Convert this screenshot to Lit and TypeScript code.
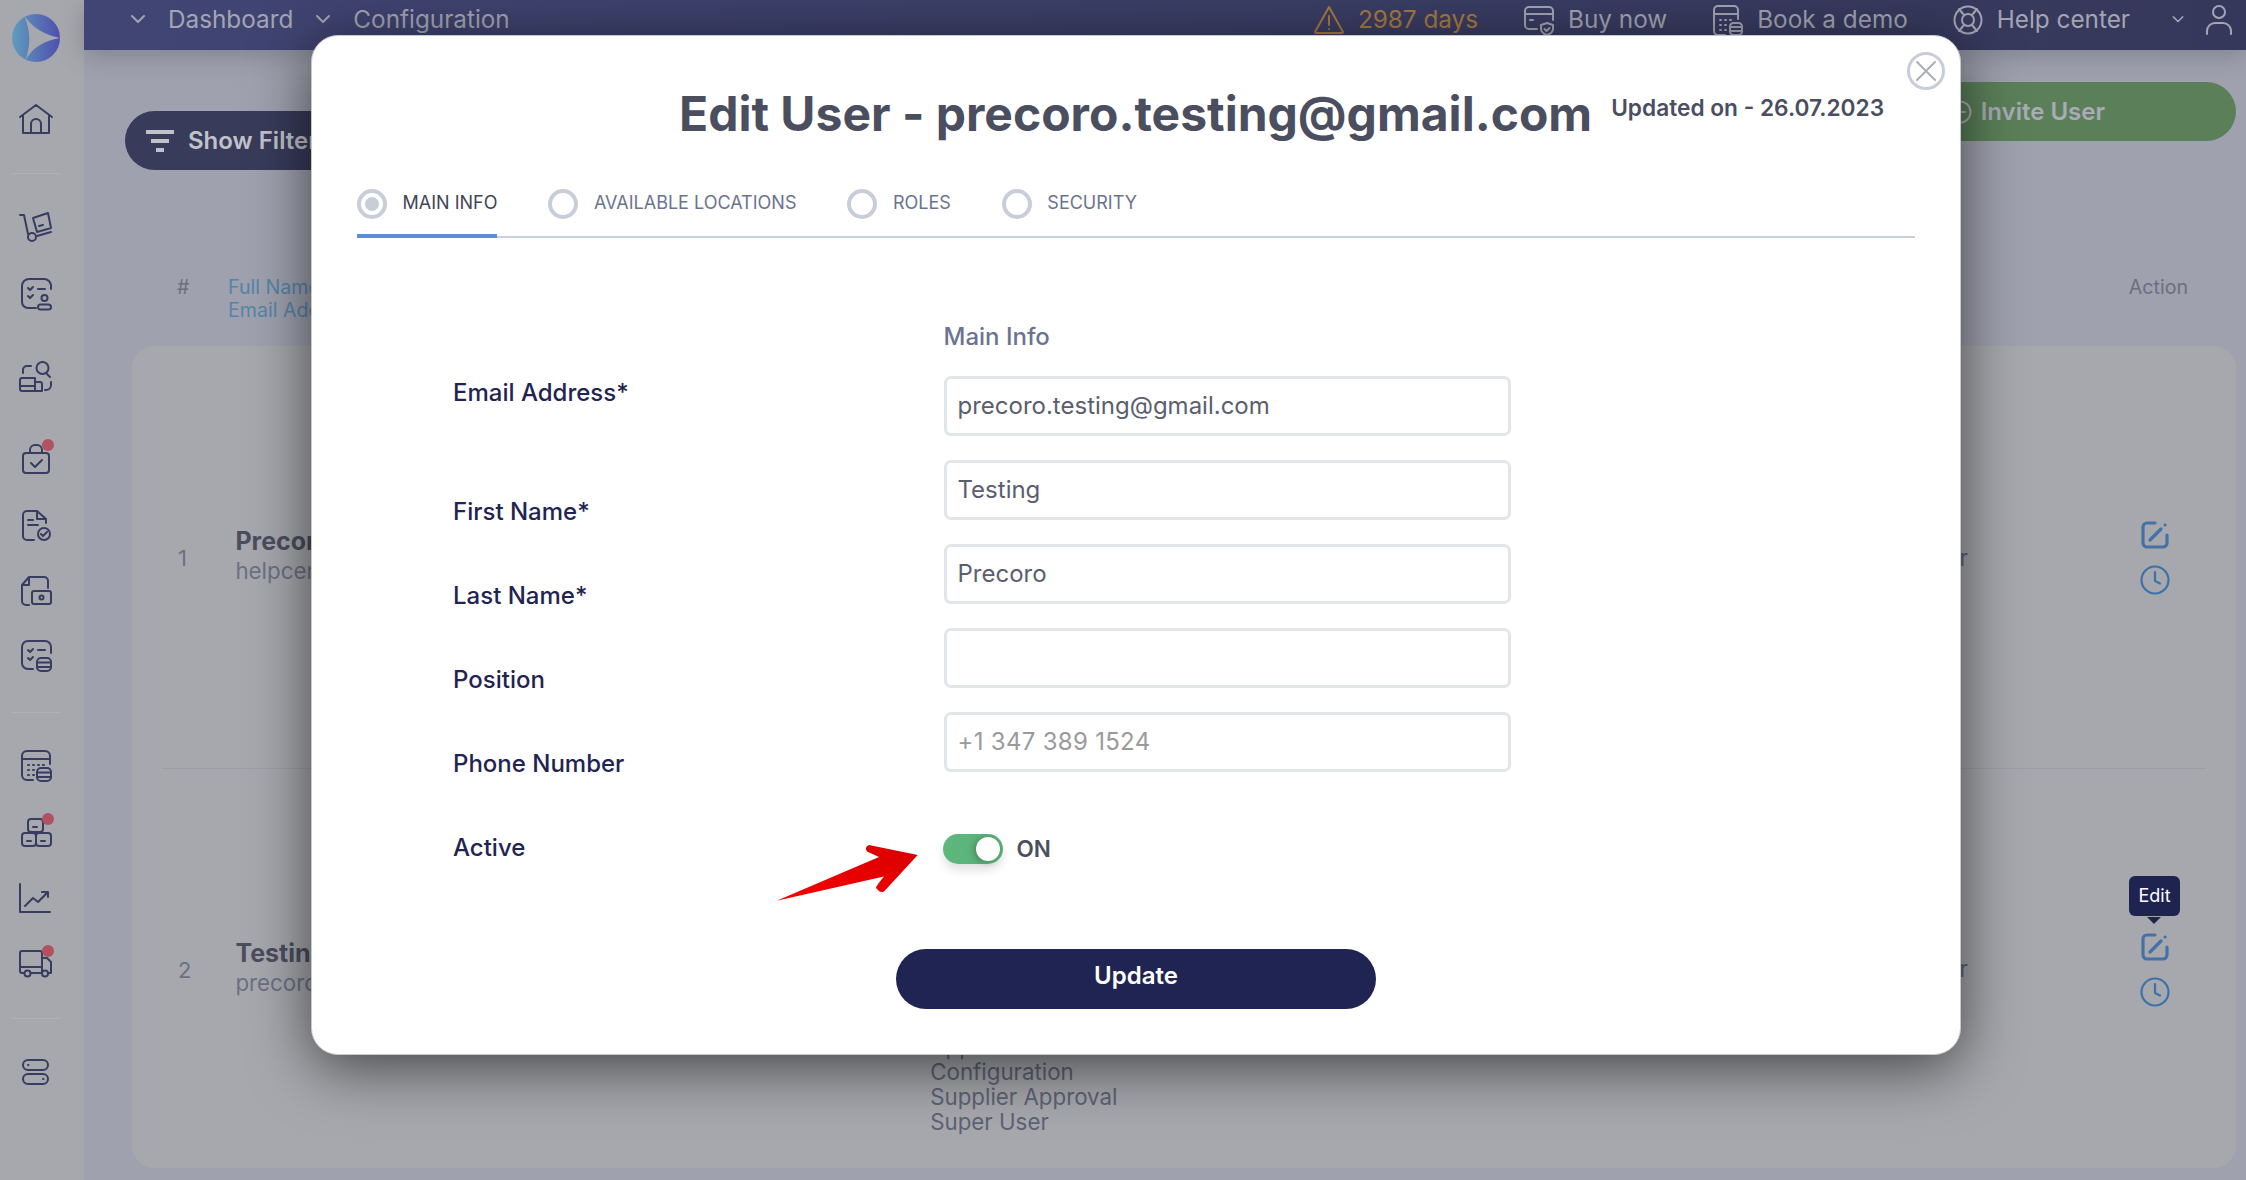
import { LitElement, html, css, svg } from "lit";
import { customElement } from "lit/decorators.js";

const db = svg`<rect x="19" y="20" width="14" height="13" rx="4"/><path d="M19 24.5h14M19 29h14"/>`;
const nav: { h: number; badge?: boolean; divider?: boolean; p?: any }[] = [
  { h: 86, p: svg`<path d="M2 16 18 4l16 12M5 14v18h26V14M13 32V23a5 5 0 0 1 10 0v9"/>` },
  { h: 22, divider: true },
  { h: 84, p: svg`<path d="M2 7h4l4 19M19 28l14-4M15 10l15-5 3 15-14 4zM21 18l4-1"/><circle cx="14" cy="29" r="4"/>` },
  { h: 54, p: svg`<path d="M18 31h-8a6 6 0 0 1-6-6V9a7 7 0 0 1 7-7h15a7 7 0 0 1 7 7v3M10 11l2 2 3-3M10 19l2 2 3-3M20 12h7"/><circle cx="26.5" cy="21" r="3"/><rect x="20" y="27.500" width="13" height="5" rx="2.500"/>` },
  { h: 110, p: svg`<path d="M5 14v-3a4 4 0 0 1 4-4h4M29 15l3 3M33 23v3a5 5 0 0 1-5 5h-1M2 27h15M17 23h5a2 2 0 0 1 2 2v7H4a2 2 0 0 1-2-2V21a2 2 0 0 1 2-2h13v13"/><circle cx="24.500" cy="9" r="6"/>` },
  { h: 52, badge: true, p: svg`<rect x="5" y="13" width="26" height="20" rx="3"/><path d="M12 13v-3a5 5 0 0 1 5-5h2a5 5 0 0 1 5 5v3M13 23l4 4 7-7"/>` },
  { h: 84, p: svg`<path d="M16 32H9a4 4 0 0 1-4-4V7a4 4 0 0 1 4-4h10l9 8v4M19 3v8h9M10 12h5M10 17h10"/><circle cx="26" cy="26" r="6"/><path d="m23 26 2 2 4-4"/>` },
  { h: 48, p: svg`<path d="M11 31H8a4 4 0 0 1-4-4V11l7-8h15a4 4 0 0 1 4 4v7M11 3v8H4"/><rect x="14" y="17" width="19" height="13" rx="2"/><circle cx="23.500" cy="23.500" r="2"/>` },
  { h: 80, p: svg`<path d="M15 31h-5a6 6 0 0 1-6-6V9a6 6 0 0 1 6-6h17a6 6 0 0 1 6 6v6M10 12l2 2 3-3M10 20l2 2 3-3M20 12h7"/>${db}` },
  { h: 32, divider: true },
  { h: 76, p: svg`<path d="M15 32H9a5 5 0 0 1-5-5V8a5 5 0 0 1 5-5h18a5 5 0 0 1 5 5v8M4 11h28M10 17h1M15 17h1M20 17h1M25 17h1M10 22h1M15 22h1M10 27h1M15 27h1"/>${db}` },
  { h: 56, badge: true, p: svg`<rect x="10" y="5" width="15" height="13" rx="3"/><rect x="4" y="19" width="14" height="13" rx="3"/><rect x="18" y="19" width="15" height="13" rx="3"/><path d="M15 13h4M9 27h4M23 27h4"/>` },
  { h: 76, p: svg`<path d="M2 4v28h30M7 26l8-8 5 4 9-9M24 12h6v5"/>` },
  { h: 56, badge: true, p: svg`<path d="M6 27H4a2 2 0 0 1-2-2V7a2 2 0 0 1 2-2h18a2 2 0 0 1 2 2v20H13M2 21h22M24 12h5l4 4v11h-2M24 27h0"/><circle cx="9.500" cy="27.500" r="3"/><circle cx="27" cy="27.500" r="3"/>` },
  { h: 52, divider: true },
  { h: 58, p: svg`<rect x="5" y="5" width="25" height="10" rx="5"/><rect x="5" y="19" width="25" height="10" rx="5"/><path d="M10 10h.5M25 24h.5"/>` },
];

const chevron = svg`<path d="M3 5l6 6 6-6"/>`;
const tabs = ["MAIN INFO", "AVAILABLE LOCATIONS", "ROLES", "SECURITY"];
const labels = ["First Name*", "Last Name*", "Position", "Phone Number", "Active"];

const editIcon = html`<svg class="act" width="28" height="28" viewBox="0 0 28 28"><path d="M14 2H6a4 4 0 0 0-4 4v16a4 4 0 0 0 4 4h16a4 4 0 0 0 4-4v-8M9 19 20 8M24 4h.1"/></svg>`;
const clockIcon = html`<svg class="clock" width="30" height="30" viewBox="0 0 30 30"><circle cx="15" cy="15" r="13.500"/><path d="M15 7v9l5 2.500"/></svg>`;

@customElement("app-root")
export class AppRoot extends LitElement {
  static styles = css`
    :host { display: block; width: 2246px; height: 1180px; position: relative; overflow: hidden; font-family: Inter, "Liberation Sans", sans-serif; background: #9fa1ae; }
    svg { display: block; fill: none; stroke: currentColor; stroke-linecap: round; stroke-linejoin: round; }
    .page { display: flex; height: 100%; }
    .side { width: 84px; flex: none; background: #a7a8ad; color: #383c60; padding-right: 12px; box-sizing: border-box; }
    .logo { height: 76px; display: flex; align-items: center; justify-content: center; }
    .logo svg { stroke: none; }
    .slot { display: flex; align-items: center; justify-content: center; }
    .icon { position: relative; width: 36px; height: 36px; }
    .icon svg { stroke-width: 2; }
    .badge { position: absolute; left: 24px; top: -1px; width: 12px; height: 12px; border-radius: 50%; background: #b2515f; }
    .divider { width: 48px; height: 1px; background: #b0b1b6; }
    .main { flex: 1; min-width: 0; display: flex; flex-direction: column; }
    .top { height: 50px; flex: none; display: flex; align-items: flex-start; padding: 0 12px 0 45px; box-sizing: border-box; background: linear-gradient(90deg, #414574, #35385a); color: #a3a5b3; font-size: 24.300px; line-height: 39px; box-shadow: 0 6px 24px rgba(60,62,80,.3); position: relative; z-index: 1; }
    .top svg { stroke-width: 2; }
    .nav-i { display: flex; align-items: center; }
    .nav-i svg { margin-right: 21px; }
    .nav-i.second { margin-left: 21px; }
    .spacer { flex: 1; }
    .h-i { display: flex; align-items: center; height: 39px; }
    .h-i svg { margin-right: 13px; }
    .warn { color: #a87a3e; margin-right: 45px; }
    .buy { margin-right: 45px; }
    .demo { margin-right: 44px; }
    .help { margin-right: 41px; }
    .content { flex: 1; display: flex; flex-direction: column; padding: 61px 10px 12px 41px; min-height: 0; }
    .bar { display: flex; justify-content: space-between; height: 59px; flex: none; }
    .pill { display: flex; align-items: center; border-radius: 30px; font-size: 24px; font-weight: 600; color: #a9abb5; box-sizing: border-box; height: 59px; }
    .filter { background: #383b5a; padding: 0 60px 0 21px; gap: 14px; color: #c0c2ca; }
    .invite { background: #5b8059; width: 400px; justify-content: flex-end; padding-right: 131px; margin-top: -29px; gap: 9px; }
    .invite svg { stroke-width: 2; }
    .thead { display: flex; height: 50px; margin-top: 106px; font-size: 19.600px; line-height: 23px; color: #6c6f80; margin-left: 52px; flex: none; padding-right: 48px; }
    .thead .hash { width: 51px; }
    .thead .sort { color: #5684a8; flex: 1; }
    .card { flex: 1; margin: 20px 0 0 7px; background: #a7a8ad; border-radius: 22px; padding: 0 30px; display: flex; flex-direction: column; }
    .row { flex: 1; display: flex; align-items: center; position: relative; padding-left: 15px; font-size: 22.300px; color: #6c7083; }
    .row + .row { border-top: 1px solid #9b9da8; flex: 399; }
    .row:first-child { flex: 423; }
    .num { width: 58px; padding-left: 1px; margin-top: 2px; font-size: 22px; }
    .person { line-height: 30px; width: 695px; white-space: nowrap; margin-top: -2px; }
    .person b { display: block; font-weight: 700; font-size: 25px; color: #4a4e5f; }
    .roles { align-self: flex-end; margin-bottom: 34px; line-height: 25px; width: 995px; color: #5e6274; height: 100px; padding-left: 7px; box-sizing: border-box; }
    .row1 .roles { visibility: hidden; }
    .tail { width: 60px; text-align: right; flex: none; margin-right: 0; color: #5e6274; }
    .acts { width: 60px; margin: 2px 21px 0 157px; display: flex; flex-direction: column; align-items: center; gap: 16px; position: relative; flex: none; }
    .act { color: #4472a8; stroke-width: 3.200; }
    .clock { color: #3a72ac; stroke-width: 2.200; }
    .tip { position: absolute; left: 4px; top: -57px; width: 51px; height: 40px; border-radius: 6px; background: #1f2350; color: #fff; font-size: 18px; display: flex; align-items: center; justify-content: center; }
    .tip::after { content: ""; position: absolute; left: 18px; top: 41px; border: 7px solid transparent; border-top-color: #1f2350; border-bottom-width: 0; }

    .modal { position: absolute; left: 311px; top: 35px; width: 1650px; height: 1020px; box-sizing: border-box; background: #fff; border-radius: 27px; border: 1px solid #c9c9cb; box-shadow: 0 12px 60px rgba(0,0,0,.6); padding: 0 45px; display: flex; flex-direction: column; z-index: 2; }
    .head { display: flex; height: 152px; box-sizing: border-box; padding: 48px 0 0 322px; color: #4a4e5f; flex: none; align-items: flex-start; }
    .head h1 { margin: 0; font-size: 48px; line-height: 60px; font-weight: 700; white-space: nowrap; }
    .updated { font-size: 22.700px; font-weight: 600; margin: 9.500px 0 0 19px; line-height: 27px; white-space: nowrap; }
    .close { position: absolute; left: 1595px; top: 16px; color: #c8ced9; }
    .close svg { stroke-width: 3; }
    .tabs { display: flex; gap: 51px; border-bottom: 2px solid #c9cfdc; height: 50px; box-sizing: border-box; flex: none; font-size: 18px; font-weight: 400; color: #6c7390; }
    .tab { display: flex; gap: 15.500px; height: 50px; box-sizing: border-box; padding-top: 1px; align-items: flex-start; line-height: 28px; white-space: nowrap; }
    .tab.on { color: #3f4458; border-bottom: 4px solid #5b8dd9; }
    .tab svg { color: #c7ced9; stroke-width: 4; }
    .tab .dot { fill: #c7ced9; stroke: none; }
    .form { display: flex; flex: none; padding: 0 0 0 96px; }
    .labels { width: 490.500px; flex: none; padding-top: 140px; font-size: 24px; font-weight: 500; color: #1f2452; }
    .lab { height: 84px; line-height: 30px; }
    .lab.first { height: 119px; }
    .fields { width: 567px; padding-top: 83.500px; }
    .section { font-size: 24px; line-height: 30px; color: #6c7390; height: 54px; font-weight: 500; }
    .input { display: block; width: 100%; height: 60px; box-sizing: border-box; border: 3px solid #e2e5ea; border-radius: 7px; padding: 0 11px; margin: 0 0 24px; font: 24px Inter, sans-serif; color: #5a5e6e; background: #fff; outline: none; }
    .input::placeholder { color: #9a9a9a; opacity: 1; letter-spacing: .3px; }
    .switch { display: flex; align-items: center; gap: 14px; margin: 62px 0 0 -1px; font-size: 22.500px; font-weight: 600; color: #4a4e5f; height: 30px; }
    .track { width: 60px; height: 30px; border-radius: 15px; background: linear-gradient(90deg, #5db87c, #5bb076); position: relative; box-shadow: 0 6px 10px rgba(0,0,0,.12); }
    .knob { position: absolute; left: 33px; top: 3px; width: 24px; height: 24px; border-radius: 50%; background: #fff; box-shadow: -2px 1px 6px rgba(0,0,0,.25); }
    .update { align-self: center; flex: none; margin-top: 32px; width: 480px; height: 60px; border: 0; border-radius: 30px; background: #1f2452; color: #fff; font: 600 24px Inter, sans-serif; padding: 0 0 8px; }
    .arrow { position: absolute; left: 770px; top: 840px; z-index: 3; }
  `;

  render() {
    return html`
      <div class="page">
        <aside class="side">
          <div class="logo">
            <svg width="48" height="48" viewBox="12 14 48 48">
              <defs><linearGradient id="lg" x1="0" x2="1" y1="0" y2="0"><stop offset="0" stop-color="#5f9dbd"/><stop offset="1" stop-color="#4f4fae"/></linearGradient></defs>
              <circle cx="36" cy="38" r="24" fill="url(#lg)"/>
              <path d="M24 15Q35 33 60.500 38 35 42 25 61 34 38 24 15Z" fill="#a7a8ad"/>
            </svg>
          </div>
          ${nav.map((n) => html`<div class="slot" style="height:${n.h}px">
            ${n.divider ? html`<div class="divider"></div>` : html`<div class="icon"><svg width="36" height="36" viewBox="0 0 36 36">${n.p}</svg>${n.badge ? html`<span class="badge"></span>` : ""}</div>`}
          </div>`)}
        </aside>
        <div class="main">
          <header class="top">
            <div class="nav-i"><svg width="18" height="18" viewBox="0 0 18 18">${chevron}</svg>Dashboard</div>
            <div class="nav-i second"><svg width="18" height="18" viewBox="0 0 18 18">${chevron}</svg>Configuration</div>
            <div class="spacer"></div>
            <div class="h-i warn"><svg width="32" height="30" viewBox="0 0 32 30"><path d="M16 2 2 27a1 1 0 0 0 1 1h26a1 1 0 0 0 1-1L16 2ZM16 11v9M16 24h.1"/></svg>2987 days</div>
            <div class="h-i buy"><svg width="32" height="32" viewBox="0 0 32 32"><path d="M14 25H6a4 4 0 0 1-4-4V7a4 4 0 0 1 4-4h20a4 4 0 0 1 4 4v9M2 10h28M7 16h3M24 19l6 2v4c0 3-3 5-6 6-3-1-6-3-6-6v-4zM21.500 25l2 2 3-3"/></svg>Buy now</div>
            <div class="h-i demo"><svg width="32" height="32" viewBox="0 0 32 32"><path d="M13 31H6a4 4 0 0 1-4-4V6a4 4 0 0 1 4-4h16a4 4 0 0 1 4 4v9M2 10h24M8 16h1M13 16h1M18 16h1M8 21h1M13 21h1M8 26h1M13 26h1"/><rect x="18" y="19" width="12" height="12" rx="3.500"/><path d="M18 23h12M18 27h12"/></svg>Book a demo</div>
            <div class="h-i help"><svg width="32" height="32" viewBox="0 0 32 32"><circle cx="16" cy="16" r="13.500"/><circle cx="16" cy="16" r="6"/><path d="M7 5l5 6M25 5l-5 6M7 27l5-6M25 27l-5-6"/></svg>Help center</div>
            <div class="h-i"><svg width="14" height="14" viewBox="0 0 18 18">${chevron}</svg><svg style="margin:0 0 0 6px" width="30" height="32" viewBox="0 0 30 32"><circle cx="15" cy="8" r="6"/><path d="M3 30v-3a8 8 0 0 1 8-8h8a8 8 0 0 1 8 8v3"/></svg></div>
          </header>
          <div class="content">
            <div class="bar">
              <div class="pill filter"><svg width="28" height="24" viewBox="0 0 28 24" style="stroke-width:4;stroke-linecap:butt"><path d="M0 3h28M5 12h18M10 21h8"/></svg>Show Filter</div>
              <div class="pill invite"><svg width="24" height="24" viewBox="0 0 24 24"><circle cx="12" cy="12" r="10.500"/><path d="M12 7v10M7 12h10"/></svg>Invite User</div>
            </div>
            <div class="thead"><div class="hash">#</div><div class="sort">Full Name<br />Email Address</div><div>Action</div></div>
            <div class="card">
              <div class="row row1">
                <div class="num">1</div>
                <div class="person"><b>Precoro</b>helpcenter@precoro.com</div>
                <div class="roles"></div>
                <div class="tail">User</div>
                <div class="acts">${editIcon}${clockIcon}</div>
              </div>
              <div class="row">
                <div class="num">2</div>
                <div class="person"><b>Testing</b>precoro.testing@gmail.com</div>
                <div class="roles">Approval<br />Configuration<br />Supplier Approval<br />Super User</div>
                <div class="tail">User</div>
                <div class="acts"><div class="tip">Edit</div>${editIcon}${clockIcon}</div>
              </div>
            </div>
          </div>
        </div>
      </div>

      <section class="modal">
        <div class="close"><svg width="38" height="38" viewBox="0 0 38 38"><circle cx="19" cy="19" r="17.500"/><path stroke-width="2" d="M10 10l18 18M28 10 10 28" style="stroke:#a9afba"/></svg></div>
        <div class="head"><h1>Edit User - precoro.testing@gmail.com</h1><div class="updated">Updated on - 26.07.2023</div></div>
        <div class="tabs">
          ${tabs.map((t, i) => html`<div class="tab ${i === 0 ? "on" : ""}"><svg width="30" height="30" viewBox="0 0 30 30"><circle cx="15" cy="15" r="13"/>${i === 0 ? svg`<circle class="dot" cx="15" cy="15" r="7"/>` : ""}</svg>${t}</div>`)}
        </div>
        <div class="form">
          <div class="labels">
            <div class="lab first">Email Address*</div>
            ${labels.map((l) => html`<div class="lab">${l}</div>`)}
          </div>
          <div class="fields">
            <div class="section">Main Info</div>
            <input class="input" .value=${"precoro.testing@gmail.com"} />
            <input class="input" .value=${"Testing"} />
            <input class="input" .value=${"Precoro"} />
            <input class="input" />
            <input class="input" placeholder="+1 347 389 1524" />
            <div class="switch"><div class="track"><div class="knob"></div></div>ON</div>
          </div>
        </div>
        <button class="update">Update</button>
      </section>

      <svg class="arrow" width="160" height="70" viewBox="770 840 160 70" style="stroke:none">
        <defs><linearGradient id="red" x1="0" x2="1" y1="1" y2="0"><stop offset="0" stop-color="#f80000"/><stop offset="1" stop-color="#d80000"/></linearGradient></defs>
        <path fill="url(#red)" d="M917.700 855 884 891.500Q880 893 878 890L876 888Q876 886 884 876.500L776.700 900.700 879 857 867 851.500Q864 847 869 845Z"/>
      </svg>
    `;
  }
}
